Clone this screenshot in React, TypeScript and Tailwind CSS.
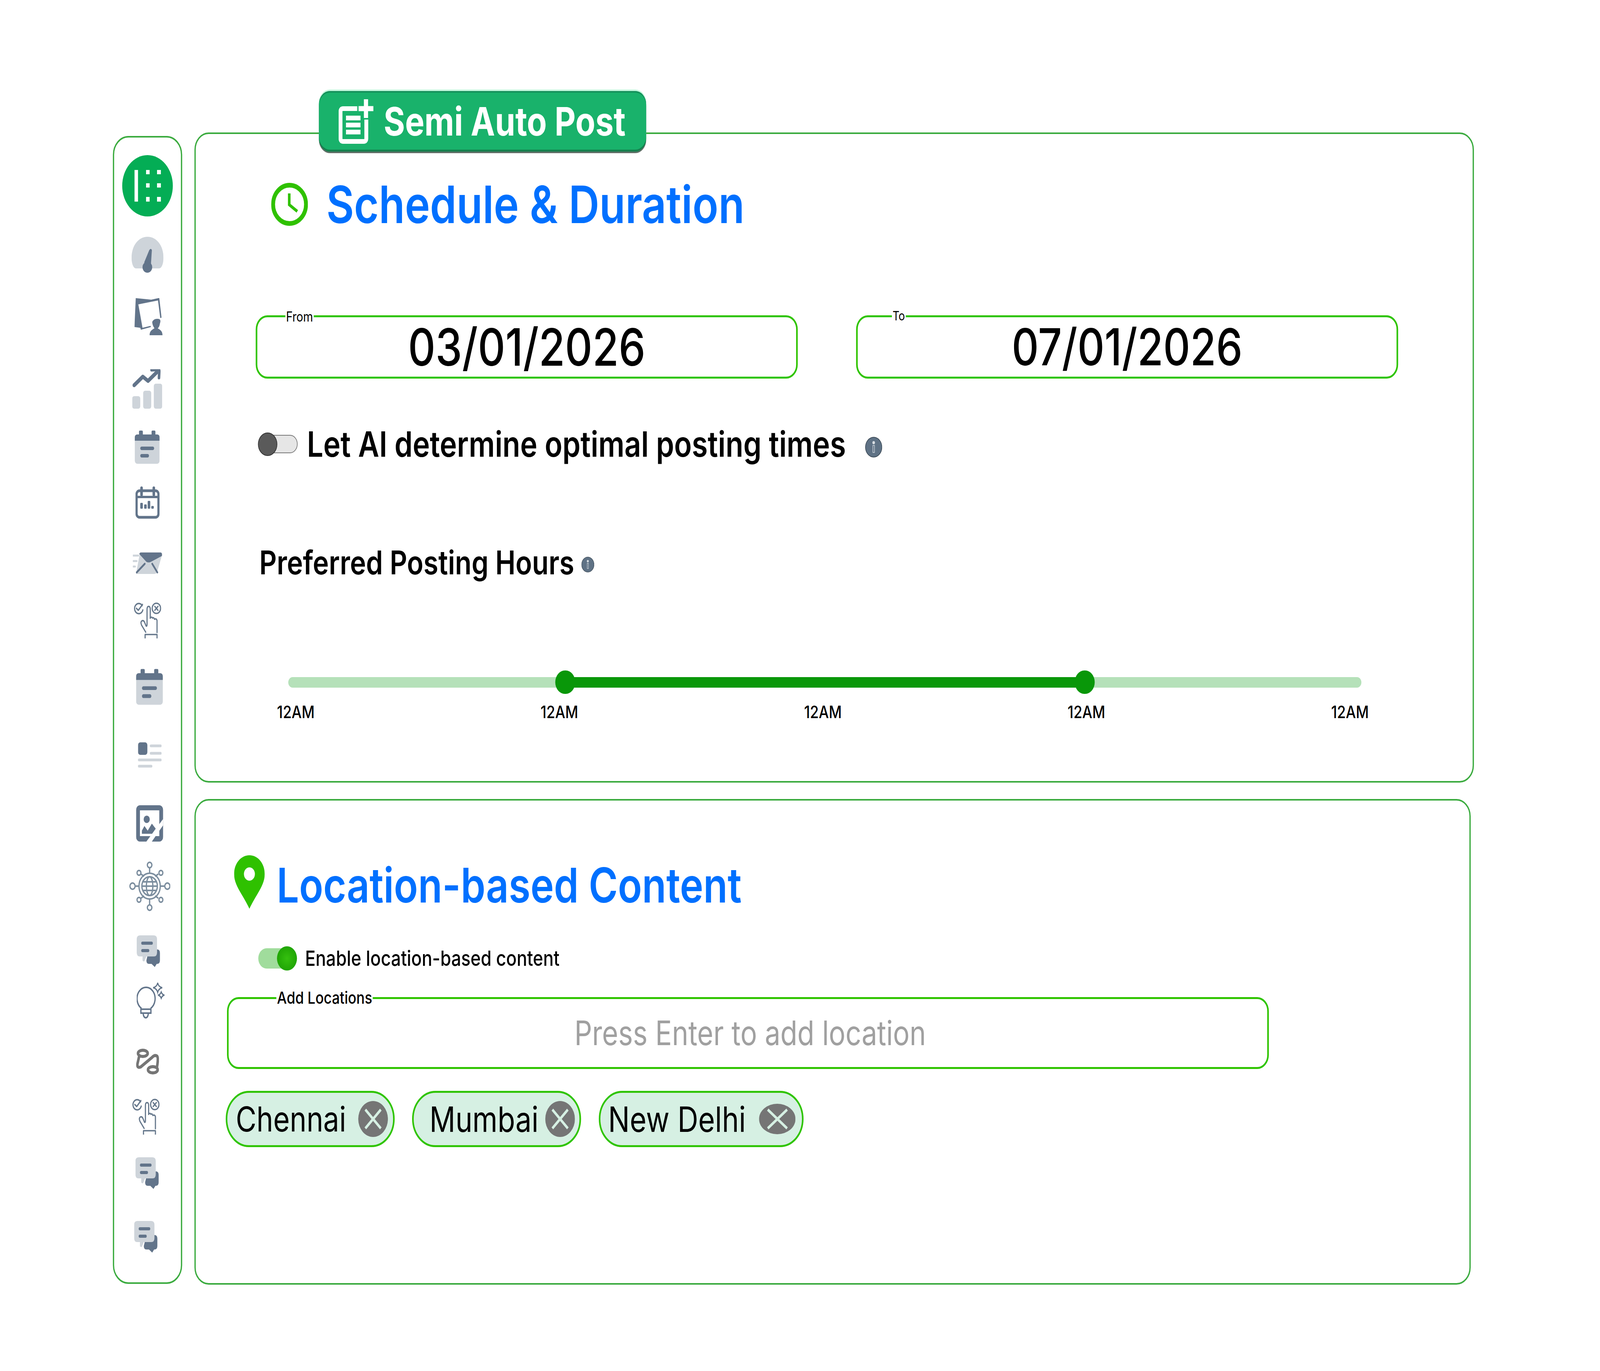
const dark = '#62748a'
const light = '#ced4da'

function Gauge({ className }: { className: string }) {
  return (
    <svg className={className} viewBox="0 0 99 94">
      <path d="M14 81C4 81 0 65 0 54C0 22 22 0 49.5 0C77 0 99 22 99 54C99 65 95 81 85 81Z" fill={light} />
      <path d="M39 66L55 34Q60 28 63 34L60 72Z" fill={dark} />
      <ellipse cx="49" cy="78" rx="15" ry="14" fill={dark} />
    </svg>
  )
}

function Screen({ className }: { className: string }) {
  return (
    <svg className={className} viewBox="0 0 87 97">
      <path d="M4 1L52 5L74 1L77 1L84 51L80 52L73 7L12 17L25 77L50 72L51 75L20 82L18 77L0 75Z" fill={dark} />
      <path d="M55 62Q60 53 72 54Q84 54 79 66Q77 76 72 78C78 82 87 84 87 96L47 96C47 84 56 82 62 78Q56 72 55 62Z" fill={dark} />
    </svg>
  )
}

function Chart({ className }: { className: string }) {
  return (
    <svg className={className} viewBox="0 0 93 101">
      <rect x="0" y="69" width="25" height="32" rx="6" fill={light} />
      <rect x="34" y="55" width="25" height="46" rx="6" fill={light} />
      <rect x="67" y="37" width="26" height="64" rx="6" fill={light} />
      <path d="M6 41L33 19L49 30L76 8" stroke={dark} strokeWidth="10" fill="none" strokeLinecap="round" strokeLinejoin="round" />
      <path d="M60 2L80 1Q84 1 84 5L83 22" stroke={dark} strokeWidth="8" fill="none" strokeLinecap="round" strokeLinejoin="round" />
    </svg>
  )
}

function CalendarFilled({ className }: { className: string }) {
  return (
    <svg className={className} viewBox="0 0 77 85">
      <rect x="0" y="10" width="77" height="75" rx="8" fill={light} />
      <path d="M0 26V18Q0 10 8 10H13V3Q13 0 16 0H22Q25 0 25 3V10H52V3Q52 0 55 0H61Q64 0 64 3V10H69Q77 10 77 18V26Z" fill={dark} />
      <rect x="17" y="41" width="43" height="9" rx="4.5" fill={dark} />
      <rect x="17" y="60" width="27" height="9" rx="4.5" fill={dark} />
    </svg>
  )
}

function CalendarOutline({ className }: { className: string }) {
  return (
    <svg className={className} viewBox="0 0 75 83">
      <rect x="3.5" y="11" width="68" height="68" rx="9" stroke={dark} strokeWidth="7" fill="white" />
      <rect x="3" y="24" width="69" height="6" fill={dark} />
      <rect x="15" y="0" width="8" height="25" rx="4" fill={dark} />
      <rect x="53" y="0" width="8" height="25" rx="4" fill={dark} />
      <rect x="15" y="42" width="8" height="15" rx="2" fill={dark} />
      <rect x="27" y="46" width="8" height="11" rx="2" fill={dark} />
      <rect x="38" y="37" width="8" height="20" rx="2" fill={dark} />
      <rect x="49" y="50" width="8" height="7" rx="2" fill={dark} />
    </svg>
  )
}

function Envelope({ className }: { className: string }) {
  return (
    <svg className={className} viewBox="0 0 91 55">
      <path d="M22 0L85 0Q92 0 90 8L76 48Q74 55 66 55L13 55Q8 55 11 50Z" fill={light} />
      <path d="M20 4Q21 0 26 0L85 0Q92 0 90 9L56 24Q49 27 42 24Z" fill={dark} />
      <path d="M12 51L37 29M60 29L76 51" stroke={dark} strokeWidth="5" strokeLinecap="round" />
      <path d="M1 8H17M1 22H12M1 36H7" stroke={light} strokeWidth="5" strokeLinecap="round" />
    </svg>
  )
}

function HandPick({ className }: { className: string }) {
  return (
    <svg className={className} viewBox="0 0 85 92" fill="none" stroke="#66788c" strokeWidth="3.6" strokeLinecap="round" strokeLinejoin="round">
      <path d="M26 8A13 13 0 1 0 28 19" />
      <path d="M8 15L14 20L27 5" />
      <circle cx="70" cy="15" r="13" />
      <path d="M65 10L75 20M75 10L65 20" />
      <path d="M37 76L24 58Q20 50 25 47Q30 45 33 50L38 60Q41 62 41 56L41 18Q41 10 46 10Q51 10 51 18L51 40" />
      <path d="M51 40Q55 35 58 40Q62 37 64 43Q70 40 72 46L72 77" />
      <path d="M35 91V82H72V91" />
    </svg>
  )
}

function ListIcon({ className }: { className: string }) {
  return (
    <svg className={className} viewBox="0 0 73 65">
      <rect x="0" y="0" width="29" height="32" rx="7" fill={dark} />
      <path d="M40 9H70M40 28H70M3 45H70M3 61H41" stroke={light} strokeWidth="7" strokeLinecap="round" />
    </svg>
  )
}

function ImageIcon({ className }: { className: string }) {
  return (
    <svg className={className} viewBox="0 0 84 94">
      <rect x="0" y="0" width="84" height="93" rx="12" fill={dark} />
      <rect x="12" y="13" width="60" height="66" fill="white" />
      <circle cx="33" cy="36" r="9.5" fill={dark} />
      <path d="M18 73V65L26 53L36 65L49 47L61 60L50 73Z" fill={dark} />
      <path d="M31 94L84 35V51L48 94Z" fill="white" />
    </svg>
  )
}

function GlobeNet({ className }: { className: string }) {
  return (
    <svg className={className} viewBox="0 0 127 127" fill="none" stroke="#7b8d9e" strokeWidth="4">
      <circle cx="63" cy="63" r="33" />
      <circle cx="63" cy="63" r="24" />
      <ellipse cx="63" cy="63" rx="10" ry="24" />
      <path d="M39 63H87M43 52H83M43 74H83" />
      <path d="M63 15V30M63 96V111M18 63H30M96 63H110M36 32L46 38M90 32L80 38M36 94L46 88M90 94L80 88" />
      <circle cx="63" cy="9" r="7" />
      <circle cx="63" cy="118" r="7" />
      <circle cx="10" cy="63" r="8" />
      <circle cx="118" cy="63" r="8" />
      <circle cx="30" cy="29" r="6" />
      <circle cx="98" cy="29" r="6" />
      <circle cx="30" cy="98" r="6" />
      <circle cx="98" cy="98" r="6" />
    </svg>
  )
}

function Chat({ className }: { className: string }) {
  return (
    <svg className={className} viewBox="0 0 73 81">
      <path d="M38 36H63Q72 36 72 45V64Q72 73 63 73H62L56 81L46 73H38Q30 73 30 64Z" fill={dark} />
      <path d="M10 0H53Q63 0 63 10V44Q63 54 53 54H30L24 66Q20 68 18 64V54H10Q0 54 0 44V10Q0 0 10 0Z" fill={light} />
      <path d="M18 20H46M18 39H35" stroke={dark} strokeWidth="8" strokeLinecap="round" />
    </svg>
  )
}

function Bulb({ className }: { className: string }) {
  return (
    <svg className={className} viewBox="0 0 87 93" fill="none" stroke={dark} strokeWidth="4">
      <path d="M15 66A28 29 0 1 1 43 66" />
      <rect x="13" y="68" width="31" height="10" />
      <path d="M20 80Q22 90 28 90Q34 90 36 80" />
      <path d="M51 13Q62 11 65 1Q68 11 79 13Q68 15 65 25Q62 15 51 13Z" strokeWidth="3.4" />
      <path d="M66 32Q73 31 76 24Q79 31 86 32Q79 33 76 40Q73 33 66 32Z" strokeWidth="3.4" />
    </svg>
  )
}

function RouteIcon({ className }: { className: string }) {
  return (
    <svg className={className} viewBox="0 0 71 66" fill="none" stroke="#757575" strokeWidth="8" strokeLinecap="round">
      <ellipse cx="21" cy="12" rx="15" ry="8" />
      <ellipse cx="52" cy="54" rx="15" ry="8" />
      <path d="M10 18L4 40Q3 50 14 47L50 22Q58 15 65 19Q70 23 65 46" />
    </svg>
  )
}

function InfoDot({ className }: { className: string }) {
  return (
    <svg className={className} viewBox="0 0 53 53">
      <circle cx="26.5" cy="26.5" r="25.5" fill="#5f7285" stroke="#2c3a46" strokeWidth="1.5" />
      <circle cx="26.5" cy="15" r="4" fill="#d9dee3" />
      <rect x="24" y="22" width="5" height="18" fill="#5f7285" stroke="#d9dee3" strokeWidth="1.5" />
    </svg>
  )
}

function CloseDot({ className }: { className: string }) {
  return (
    <svg className={className} viewBox="0 0 92 92">
      <ellipse cx="46" cy="46" rx="46" ry="46" fill="#757575" />
      <path d="M22 22L70 70M70 22L22 70" stroke="#d6f0e3" strokeWidth="7" />
    </svg>
  )
}

function Field({ label, labelClass, children, className }: { label: string; labelClass: string; children: React.ReactNode; className: string }) {
  return (
    <div className={`relative flex items-center justify-center rounded-[36px] border-[5px] border-[#2fc400] bg-white ${className}`}>
      <span className={`absolute bg-white font-['Inter',sans-serif] leading-none text-black ${labelClass}`}>{label}</span>
      {children}
    </div>
  )
}

export default function App() {
  const hours = ['12AM', '12AM', '12AM', '12AM', '12AM']
  // the design is 4962 wide; fit it when the browser window comes out narrower
  const fit = Math.min(1, window.innerWidth / 4962)

  return (
    <div
      className="flex h-[3509px] w-[4962px] origin-top-left items-start gap-[38px] bg-white pl-[350px] pt-[339px] font-['Inter',sans-serif] text-black"
      style={{ transform: `scaleX(${fit})` }}
    >
      {/* Sidebar */}
      <div className="mt-[9px] flex h-[2938px] w-[215px] shrink-0 flex-col items-start rounded-[48px] border-[4px] border-[#3bab3f]">
        <div className="ml-[25px] mt-[45px] flex h-[157px] w-[157px] items-center justify-center rounded-full bg-[#04ad55]">
          <svg className="h-[81px] w-[82px]" viewBox="0 0 82 81" fill="white">
            <rect x="0" y="0" width="11" height="81" />
            <rect x="36" y="0" width="11" height="11" />
            <rect x="70" y="0" width="12" height="11" />
            <rect x="36" y="34" width="11" height="11" />
            <rect x="70" y="34" width="12" height="11" />
            <rect x="36" y="69" width="11" height="12" />
            <rect x="70" y="69" width="12" height="12" />
          </svg>
        </div>
        <Gauge className="ml-[54px] mt-[52px] h-[94px] w-[99px]" />
        <Screen className="ml-[63px] mt-[62px] h-[97px] w-[87px]" />
        <Chart className="ml-[56px] mt-[86px] h-[101px] w-[93px]" />
        <CalendarFilled className="ml-[64px] mt-[56px] h-[85px] w-[77px]" />
        <CalendarOutline className="ml-[66px] mt-[58px] h-[83px] w-[75px]" />
        <Envelope className="ml-[58px] mt-[86px] h-[55px] w-[91px]" />
        <HandPick className="ml-[61px] mt-[73px] h-[92px] w-[85px]" />
        <CalendarFilled className="ml-[68px] mt-[78px] h-[92px] w-[83px]" />
        <ListIcon className="ml-[74px] mt-[96px] h-[65px] w-[73px]" />
        <ImageIcon className="ml-[68px] mt-[96px] h-[94px] w-[84px]" />
        <GlobeNet className="ml-[47px] mt-[50px] h-[127px] w-[127px]" />
        <Chat className="ml-[70px] mt-[62px] h-[81px] w-[73px]" />
        <Bulb className="ml-[70px] mt-[40px] h-[93px] w-[87px]" />
        <RouteIcon className="ml-[68px] mt-[76px] h-[66px] w-[71px]" />
        <HandPick className="ml-[56px] mt-[62px] h-[92px] w-[85px]" />
        <Chat className="ml-[66px] mt-[58px] h-[81px] w-[73px]" />
        <Chat className="ml-[62px] mt-[82px] h-[81px] w-[73px]" />
      </div>

      <div className="flex flex-col gap-[42px]">
        {/* Schedule & Duration */}
        <div className="relative h-[1664px] w-[3968px] rounded-[44px] border-[4px] border-[#3bab3f]">
          <div className="absolute left-[382px] top-[-110px] flex h-[155px] w-[1015px] items-center rounded-[34px] bg-[#19b26b] pl-[61px] shadow-[inset_0_4px_0_#14905a,inset_0_-5px_0_#15804e,0_4px_0_#5f6f66,0_-4px_0_#c6f7de]">
            <svg className="h-[114px] w-[108px]" viewBox="0 0 108 114" fill="none" stroke="white" strokeWidth="12">
              <path d="M58 24H14Q6 24 6 32V100Q6 108 14 108H78Q86 108 86 100V52" />
              <path d="M85 0V48M62 24H108" strokeWidth="13" />
              <path d="M23 48H68M23 66H68M23 84H68" strokeWidth="12" />
            </svg>
            <span className="ml-[32px] whitespace-nowrap text-[101px] font-bold leading-none text-white">Semi Auto Post</span>
          </div>

          <div className="ml-[234px] mt-[115px] flex h-[130px] items-center">
            <svg className="h-[110px] w-[114px]" viewBox="0 0 114 110" fill="none" stroke="#2fc100">
              <ellipse cx="57" cy="55" rx="51" ry="49" strokeWidth="12" />
              <path d="M56 27V56L81 73" strokeWidth="8" />
            </svg>
            <h1 className="ml-[57px] whitespace-nowrap text-[132px] font-semibold leading-none text-[#0070ff]">Schedule &amp; Duration</h1>
          </div>

          <div className="ml-[186px] mt-[219px] flex gap-[181px]">
            <Field label="From" labelClass="left-[87px] top-[-19px] px-[2px] text-[35px]" className="h-[162px] w-[1681px]">
              <span className="text-[132px] font-medium leading-none">03/01/2026</span>
            </Field>
            <Field label="To" labelClass="left-[106px] top-[-20px] px-[2px] text-[33px]" className="h-[162px] w-[1681px]">
              <span className="text-[130px] font-medium leading-none">07/01/2026</span>
            </Field>
          </div>

          <div className="ml-[193px] mt-[122px] flex h-[92px] items-center">
            <div className="relative h-[60px] w-[123px]">
              <div className="absolute left-[40px] top-[6px] h-[47px] w-[83px] rounded-r-full border-[2px] border-[#777777] bg-[#e6e6e6]" />
              <div className="absolute left-0 top-0 h-[60px] w-[60px] rounded-full border-[2px] border-[#333333] bg-[#5a5a5a]" />
            </div>
            <span className="ml-[29px] whitespace-nowrap text-[90px] font-semibold leading-none">Let AI determine optimal posting times</span>
            <InfoDot className="ml-[60px] mt-[14px] h-[53px] w-[53px]" />
          </div>

          <div className="ml-[197px] mt-[214px] flex h-[86px] items-center">
            <span className="whitespace-nowrap text-[84px] font-semibold leading-none">Preferred Posting Hours</span>
            <InfoDot className="ml-[22px] mt-[10px] h-[40px] w-[40px]" />
          </div>

          <div className="relative ml-[287px] mt-[233px] flex h-[60px] w-[3328px] items-center">
            <div className="h-[27px] w-full rounded-full bg-[#b5e1b9]" />
            <div className="absolute left-[858px] top-[17px] h-[27px] w-[1612px] bg-[#099709]" />
            <div className="absolute left-[828px] top-0 h-[60px] w-[62px] rounded-full bg-[#099709]" />
            <div className="absolute left-[2439px] top-0 h-[60px] w-[62px] rounded-full bg-[#099709]" />
          </div>

          <div className="ml-[252px] mt-[24px] flex w-[3386px] justify-between text-[44px] font-medium leading-none">
            {hours.map((hour, i) => (
              <span key={i}>{hour}</span>
            ))}
          </div>
        </div>

        {/* Location-based Content */}
        <div className="h-[1243px] w-[3958px] rounded-[44px] border-[4px] border-[#3bab3f]">
          <div className="ml-[119px] mt-[140px] flex h-[137px] items-center">
            <svg className="h-[137px] w-[95px]" viewBox="0 0 95 137">
              <path fillRule="evenodd" d="M47.5 0C74 0 95 21 95 48C95 78 68 100 47.5 137C27 100 0 78 0 48C0 21 21 0 47.5 0ZM47.5 31A17 17 0 1 0 47.5 65A17 17 0 1 0 47.5 31Z" fill="#2fc100" />
            </svg>
            <h2 className="ml-[37px] mt-[16px] whitespace-nowrap text-[123px] font-semibold leading-none text-[#0070ff]">Location-based Content</h2>
          </div>

          <div className="ml-[194px] mt-[96px] flex h-[62px] items-center">
            <div className="relative h-[62px] w-[120px]">
              <div className="absolute left-0 top-[5px] h-[52px] w-[90px] rounded-l-full bg-[#a0dc9c]" />
              <div className="absolute left-[58px] top-0 h-[62px] w-[62px] rounded-full bg-[radial-gradient(circle,#35c00f,#179a00)]" />
            </div>
            <span className="ml-[25px] whitespace-nowrap text-[54px] font-medium leading-none">Enable location-based content</span>
          </div>

          <Field label="Add Locations" labelClass="left-[148px] top-[-25px] px-[2px] text-[43px] font-medium" className="ml-[97px] mt-[68px] h-[184px] w-[3231px]">
            <span className="pl-[14px] text-[86px] leading-none text-[#a0a0a0]">Press Enter to add location</span>
          </Field>

          <div className="ml-[93px] mt-[56px] flex">
            <div className="flex h-[144px] w-[524px] items-center rounded-full border-[5px] border-[#2fc400] bg-[#d6f0e3] pl-[26px] pr-[16px]">
              <span className="text-[88px] leading-none">Chennai</span>
              <CloseDot className="ml-auto h-[92px] w-[92px]" />
            </div>
            <div className="ml-[54px] flex h-[144px] w-[524px] items-center rounded-full border-[5px] border-[#2fc400] bg-[#d6f0e3] pl-[49px] pr-[14px]">
              <span className="text-[89px] leading-none">Mumbai</span>
              <CloseDot className="ml-auto h-[92px] w-[92px]" />
            </div>
            <div className="ml-[55px] flex h-[144px] w-[635px] items-center rounded-full border-[5px] border-[#2fc400] bg-[#d6f0e3] pl-[24px] pr-[20px]">
              <span className="text-[89px] leading-none">New Delhi</span>
              <svg className="ml-auto h-[78px] w-[113px]" viewBox="0 0 113 78">
                <ellipse cx="56.5" cy="39" rx="56.5" ry="39" fill="#757575" />
                <path d="M27 15L87 63M87 15L27 63" stroke="#d6f0e3" strokeWidth="7" />
              </svg>
            </div>
          </div>
        </div>
      </div>
    </div>
  )
}
